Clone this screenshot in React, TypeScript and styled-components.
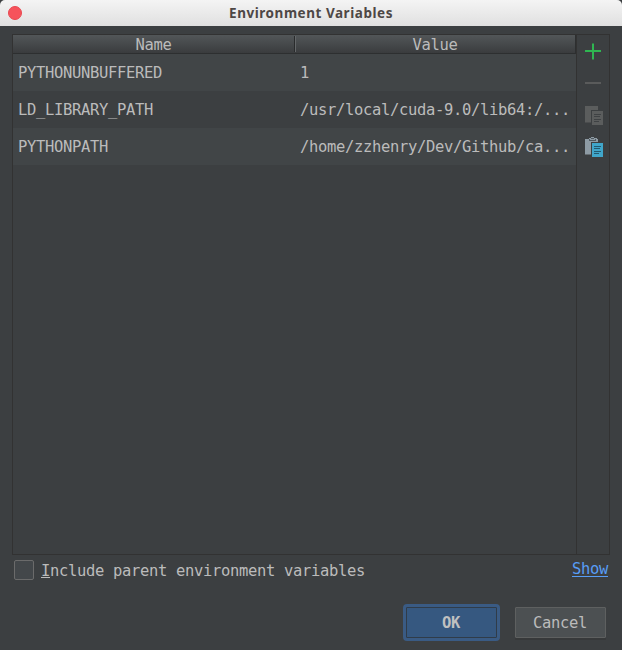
import React from 'react';
import styled, { createGlobalStyle } from 'styled-components';

const GlobalStyle = createGlobalStyle`
  * { box-sizing: border-box; }
  html, body { margin: 0; padding: 0; background: #3c3f41; overflow: hidden; }
`;

const Dialog = styled.div`
  width: 622px;
  height: 650px;
  display: flex;
  flex-direction: column;
  background: #3c3f41;
  color: #bbbbbb;
  font: 15.5px/20px "DejaVu Sans Mono", monospace;
  letter-spacing: -0.332px;
`;

const TitleBar = styled.header`
  flex: 0 0 26px;
  display: grid;
  grid-template-columns: 30px 1fr 30px;
  align-items: center;
  background: linear-gradient(#f4f4f4, #e0e0e0);
  border-radius: 5px 5px 0 0;
`;

const CloseButton = styled.button`
  width: 14px;
  height: 14px;
  margin-left: 8px;
  padding: 0;
  border: 1px solid #e94850;
  border-radius: 50%;
  background: #f6535b;
`;

const Title = styled.h1`
  margin: 0;
  padding-bottom: 1px;
  text-align: center;
  font: bold 13.5px/20px "Noto Sans", sans-serif;
  letter-spacing: 0.54px;
  color: #4d4745;
  white-space: nowrap;
`;

const Panel = styled.section`
  display: grid;
  grid-template-columns: 563px 32px;
  column-gap: 1px;
  width: 598px;
  height: 521px;
  margin: 8px 0 0 12px;
  border: 1px solid #323232;
  background: linear-gradient(#323232, #323232) 563px 0 / 1px 100% no-repeat;
`;

const Table = styled.div`
  display: flex;
  flex-direction: column;
`;

const HeaderRow = styled.div`
  display: grid;
  grid-template-columns: 283px 280px;
  height: 19px;
  border-bottom: 1px solid #2d2f30;
  border-right: 1px solid #2d2f30;
  background: linear-gradient(#525658, #3a3c3e);
`;

const HeaderCell = styled.div<{ $divided?: boolean }>`
  padding-right: 2px;
  text-align: center;
  line-height: 20px;
  background: ${p => p.$divided
    ? 'linear-gradient(#292b2c, #292b2c) 281px 1px / 1px 16px no-repeat, linear-gradient(#646769, #646769) 282px 1px / 1px 16px no-repeat'
    : 'none'};
`;

const Row = styled.div<{ $striped: boolean }>`
  display: grid;
  grid-template-columns: 282px 281px;
  align-items: center;
  height: 37px;
  background: ${p => (p.$striped ? '#414547' : '#3c3f41')};
`;

const Cell = styled.div`
  padding: 1px 0 0 5px;
  white-space: nowrap;
`;

const Toolbar = styled.div`
  display: flex;
  flex-direction: column;
`;

const ToolButton = styled.button`
  width: 32px;
  height: 32px;
  padding: 0;
  border: 0;
  background: none;
  svg { display: block; }
`;

const Options = styled.div`
  display: flex;
  justify-content: space-between;
  height: 31px;
  padding: 5px 14px 0;
`;

const CheckLabel = styled.label`
  display: flex;
  height: 20px;
`;

const Checkbox = styled.span`
  width: 20px;
  height: 20px;
  margin-right: 7px;
  border: 1px solid #6b6b6b;
  border-radius: 2px;
  background: #43474a;
`;

const LabelText = styled.span`
  padding-top: 1px;
`;

const Mnemonic = styled.span`
  display: inline-block;
  height: 17px;
  border-bottom: 1px solid #bbbbbb;
`;

const ShowLink = styled.a`
  height: 18px;
  margin-top: -1px;
  border-bottom: 1px solid #589df6;
  color: #589df6;
`;

const Actions = styled.footer`
  display: flex;
  align-items: flex-start;
  gap: 15px;
  padding: 18px 0 0 403px;
`;

const Button = styled.button<{ $primary?: boolean }>`
  width: ${p => (p.$primary ? 97 : 91)}px;
  height: ${p => (p.$primary ? 37 : 31)}px;
  margin-top: ${p => (p.$primary ? 0 : 3)}px;
  padding: 0 1px 0 0;
  border: ${p => (p.$primary ? '3px solid #3a5b84' : '1px solid #5e6060')};
  border-radius: ${p => (p.$primary ? 4 : 1)}px;
  background: ${p => (p.$primary ? '#365880' : '#4c5052')};
  box-shadow: ${p => (p.$primary ? 'inset 0 0 0 1px #303c49' : '0 2px 0 #37393a')};
  color: ${p => (p.$primary ? '#c0c0c0' : '#bbbbbb')};
  font: inherit;
  font-weight: ${p => (p.$primary ? 'bold' : 'normal')};
  letter-spacing: inherit;
`;

const AddIcon = () => (
  <svg width="32" height="32">
    <path d="M8 16h16M16 8.5v16" stroke="#2fb651" strokeWidth="2" />
  </svg>
);

const RemoveIcon = () => (
  <svg width="32" height="32">
    <path d="M8 16h16" stroke="#5a5b5b" strokeWidth="2" />
  </svg>
);

const CopyIcon = () => (
  <svg width="32" height="32">
    <path d="M8 7h13v4h-7v12.5H8z" fill="#5b5d5d" />
    <path d="M15 12h11v14H15z" fill="#5b5d5d" />
    <path d="M17 15.5h7M17 17.5h6M17 20.5h7M17 22.5h5" stroke="#3f4244" />
  </svg>
);

const PasteIcon = () => (
  <svg width="32" height="32">
    <path d="M8 8h4V7h2V6h3v1h3v1h1v3h-7v12.5H8z" fill="#8e9ba4" />
    <path d="M12 8h1v1h5V8h1v2h-7zM14 7h3v1h-3z" fill="#505a60" />
    <path d="M15 12h11v14H15z" fill="#40a6ca" />
    <path d="M17 15.5h7M17 17.5h6M17 20.5h7M17 22.5h5" stroke="#235a70" />
  </svg>
);

const variables = [
  ['PYTHONUNBUFFERED', '1'],
  ['LD_LIBRARY_PATH', '/usr/local/cuda-9.0/lib64:/...'],
  ['PYTHONPATH', '/home/zzhenry/Dev/Github/ca...'],
];

export default function App() {
  return (
    <Dialog>
      <GlobalStyle />
      <TitleBar>
        <CloseButton aria-label="Close" />
        <Title>Environment Variables</Title>
      </TitleBar>
      <Panel>
        <Table>
          <HeaderRow>
            <HeaderCell $divided>Name</HeaderCell>
            <HeaderCell>Value</HeaderCell>
          </HeaderRow>
          {variables.map(([name, value], i) => (
            <Row key={name} $striped={i % 2 === 0}>
              <Cell>{name}</Cell>
              <Cell>{value}</Cell>
            </Row>
          ))}
        </Table>
        <Toolbar>
          <ToolButton aria-label="Add"><AddIcon /></ToolButton>
          <ToolButton aria-label="Remove" disabled><RemoveIcon /></ToolButton>
          <ToolButton aria-label="Copy" disabled><CopyIcon /></ToolButton>
          <ToolButton aria-label="Paste"><PasteIcon /></ToolButton>
        </Toolbar>
      </Panel>
      <Options>
        <CheckLabel>
          <Checkbox />
          <LabelText><Mnemonic>I</Mnemonic>nclude parent environment variables</LabelText>
        </CheckLabel>
        <ShowLink>Show</ShowLink>
      </Options>
      <Actions>
        <Button $primary>OK</Button>
        <Button>Cancel</Button>
      </Actions>
    </Dialog>
  );
}
